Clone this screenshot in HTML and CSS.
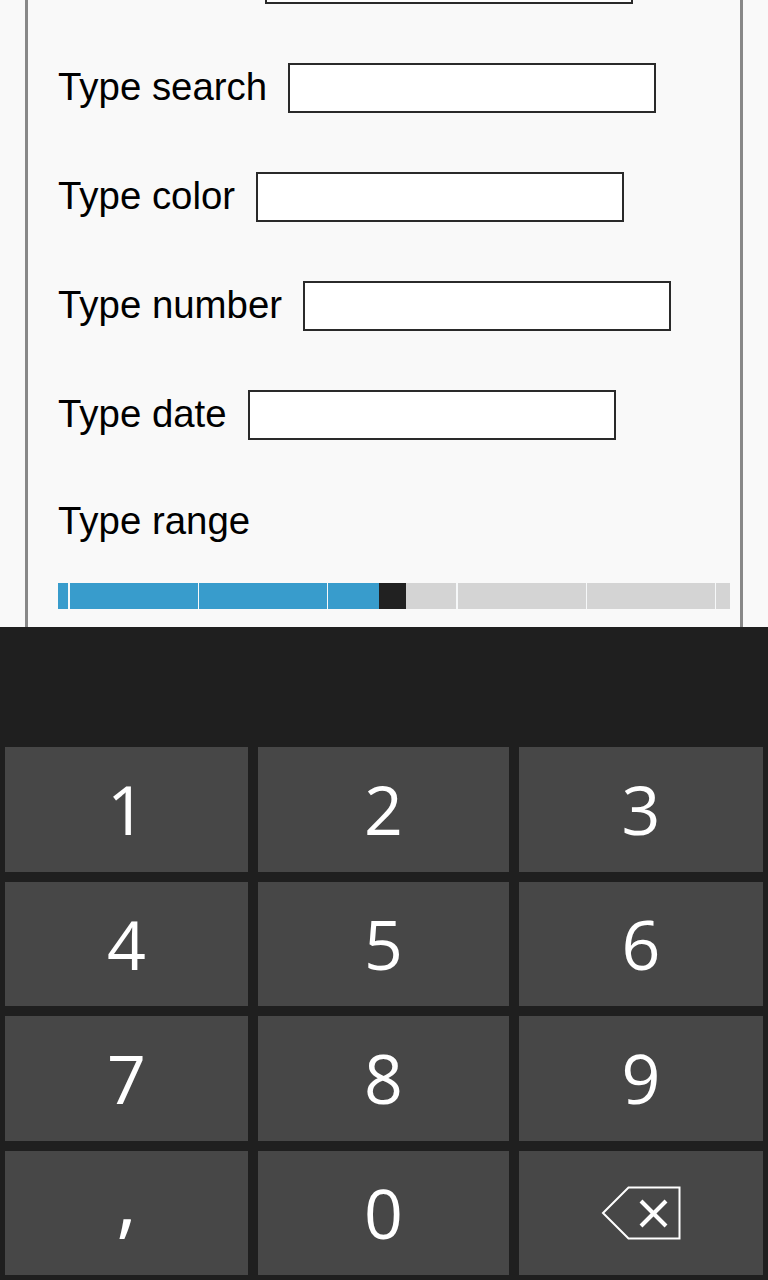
FILE: index.html
```html
<!DOCTYPE html>
<html lang="en">
<head>
<meta charset="utf-8">
<title>Input types</title>
<link rel="stylesheet" href="styles.css">
</head>
<body>
<div class="screen">
  <form class="form">
    <div class="row"><span class="label label-hidden"></span><input class="field" type="text" aria-label="field"></div>
    <div class="row"><label class="label">Type search</label><input class="field" type="text"></div>
    <div class="row"><label class="label">Type color</label><input class="field" type="text"></div>
    <div class="row"><label class="label">Type number</label><input class="field" type="text"></div>
    <div class="row"><label class="label">Type date</label><input class="field" type="text"></div>
    <div class="range-label">Type range</div>
    <div class="range"><div class="thumb"></div></div>
  </form>
</div>
<div class="keyboard">
  <div class="keys">
    <div class="key">1</div>
    <div class="key">2</div>
    <div class="key">3</div>
    <div class="key">4</div>
    <div class="key">5</div>
    <div class="key">6</div>
    <div class="key">7</div>
    <div class="key">8</div>
    <div class="key">9</div>
    <div class="key"><span class="comma">,</span></div>
    <div class="key">0</div>
    <div class="key">
      <svg class="backspace" width="80" height="54" viewBox="0 0 80 54">
        <polygon points="2,27 27.5,1.5 78.5,1.5 78.5,52.5 27.5,52.5" fill="none" stroke="#fff" stroke-width="2"/>
        <line x1="40" y1="15" x2="65" y2="40" stroke="#fff" stroke-width="4"/>
        <line x1="65" y1="15" x2="40" y2="40" stroke="#fff" stroke-width="4"/>
      </svg>
    </div>
  </div>
</div>
</body>
</html>
```

FILE: styles.css
```css
html, body {
  margin: 0;
  padding: 0;
}

body {
  width: 768px;
  height: 1280px;
  display: flex;
  flex-direction: column;
  background: #f9f9f9;
  overflow: hidden;
  font-family: "Liberation Sans", Arial, sans-serif;
}

.screen {
  flex: 0 0 627px;
  overflow: hidden;
}

.form {
  margin: -46px 0 0 25px;
  width: 718px;
  height: 760px;
  box-sizing: border-box;
  border-left: 3px solid #888888;
  border-right: 3px solid #888888;
  padding: 0 10px 0 30px;
  background: #f9f9f9;
}

.row {
  display: flex;
  align-items: center;
  gap: 21px;
  height: 50px;
  margin-bottom: 59px;
}

.label {
  font-size: 38.4px;
  line-height: 44px;
  color: #000;
  margin-bottom: 3px;
  white-space: nowrap;
}

.label-hidden {
  width: 186px;
  height: 44px;
}

.field {
  box-sizing: border-box;
  width: 368px;
  height: 50px;
  margin: 0;
  padding: 0;
  border: 2px solid #2a2a2a;
  border-radius: 0;
  background: #fff;
  outline: none;
}

.range-label {
  font-size: 38.4px;
  line-height: 44px;
  color: #000;
}

.range {
  margin-top: 40px;
  height: 26px;
  display: flex;
  background:
    repeating-linear-gradient(90deg, transparent 0 10.3px, #f6f8f9 10.3px 11.8px, transparent 11.8px 129.3px),
    linear-gradient(90deg, #389ccc 0 321px, #d4d4d4 321px);
}

.thumb {
  width: 27px;
  height: 100%;
  margin-left: 321px;
  background: #212121;
}

.keyboard {
  flex: 1;
  box-sizing: border-box;
  background: #1f1f1f;
  padding: 120px 5px 5px;
}

.keys {
  display: grid;
  grid-template-columns: 243px 251px 244px;
  grid-template-rows: repeat(4, 124.5px);
  gap: 10px;
}

.key {
  background: #474747;
  color: #fff;
  display: flex;
  align-items: center;
  justify-content: center;
  font-family: "Open Sans", "Noto Sans", sans-serif;
  font-weight: 400;
  font-size: 68px;
  line-height: 1;
}

.comma {
  font-size: 80px;
  font-weight: 400;
  margin-bottom: 30px;
}

.backspace {
  display: block;
}
```
